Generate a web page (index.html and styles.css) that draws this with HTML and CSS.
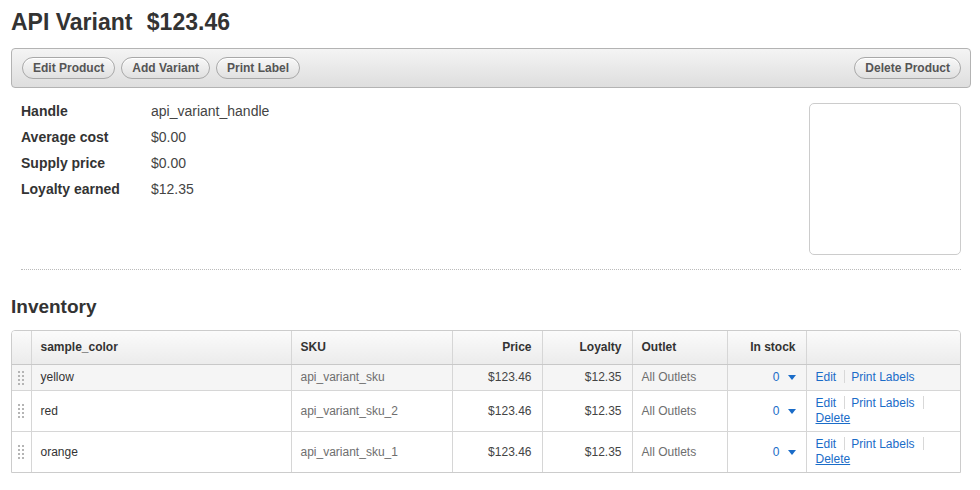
FILE: index.html
```html
<!DOCTYPE html>
<html>
<head>
<meta charset="utf-8">
<link rel="stylesheet" href="styles.css">
</head>
<body>
<div class="page">
  <h1 class="title">API Variant <span class="title-price">$123.46</span></h1>

  <div class="toolbar">
    <div class="toolbar-left">
      <button class="btn">Edit Product</button>
      <button class="btn">Add Variant</button>
      <button class="btn">Print Label</button>
    </div>
    <button class="btn">Delete Product</button>
  </div>

  <div class="details">
    <dl class="info">
      <dt>Handle</dt><dd>api_variant_handle</dd>
      <dt>Average cost</dt><dd>$0.00</dd>
      <dt>Supply price</dt><dd>$0.00</dd>
      <dt>Loyalty earned</dt><dd>$12.35</dd>
    </dl>
    <div class="image-box"></div>
  </div>

  <h2 class="section-title">Inventory</h2>

  <div class="table-wrap">
    <table class="inv">
      <colgroup>
        <col class="c-handle"><col class="c-color"><col class="c-sku"><col class="c-price"><col class="c-loyalty"><col class="c-outlet"><col class="c-stock"><col class="c-actions">
      </colgroup>
      <thead>
        <tr>
          <th></th>
          <th>sample_color</th>
          <th>SKU</th>
          <th class="num">Price</th>
          <th class="num">Loyalty</th>
          <th>Outlet</th>
          <th class="num">In stock</th>
          <th></th>
        </tr>
      </thead>
      <tbody>
        <tr class="hover">
          <td class="drag"><span class="grip"></span></td>
          <td class="name">yellow</td>
          <td class="muted">api_variant_sku</td>
          <td class="num">$123.46</td>
          <td class="num">$12.35</td>
          <td class="muted">All Outlets</td>
          <td class="num"><a class="stock">0<span class="caret"></span></a></td>
          <td class="actions"><a>Edit</a><span class="sep"></span><a>Print Labels</a></td>
        </tr>
        <tr>
          <td class="drag"><span class="grip"></span></td>
          <td class="name">red</td>
          <td class="muted">api_variant_sku_2</td>
          <td class="num">$123.46</td>
          <td class="num">$12.35</td>
          <td class="muted">All Outlets</td>
          <td class="num"><a class="stock">0<span class="caret"></span></a></td>
          <td class="actions"><a>Edit</a><span class="sep"></span><a>Print Labels</a><span class="sep"></span><a class="del">Delete</a></td>
        </tr>
        <tr>
          <td class="drag"><span class="grip"></span></td>
          <td class="name">orange</td>
          <td class="muted">api_variant_sku_1</td>
          <td class="num">$123.46</td>
          <td class="num">$12.35</td>
          <td class="muted">All Outlets</td>
          <td class="num"><a class="stock">0<span class="caret"></span></a></td>
          <td class="actions"><a>Edit</a><span class="sep"></span><a>Print Labels</a><span class="sep"></span><a class="del">Delete</a></td>
        </tr>
      </tbody>
    </table>
  </div>
</div>
</body>
</html>
```

FILE: styles.css
```css
* { box-sizing: border-box; }
html, body { margin: 0; padding: 0; background: #fff; }
body {
  font-family: "Liberation Sans", Arial, Helvetica, sans-serif;
  color: #333;
}
.page {
  padding: 8px 9px 0 11px;
}
.title {
  margin: 0;
  font-size: 23px;
  line-height: 28px;
  font-weight: bold;
  color: #333;
}
.title-price { margin-left: 8px; }

.toolbar {
  margin-top: 12px;
  height: 40px;
  border: 1px solid #b3b3b3;
  border-radius: 4px;
  background: linear-gradient(#f4f4f4, #dedede);
  display: flex;
  align-items: center;
  justify-content: space-between;
  padding: 0 9px 0 10px;
}
.toolbar-left { display: flex; gap: 6px; }
.btn {
  height: 22px;
  padding: 0 10px;
  border: 1px solid #a8a8a8;
  border-radius: 11px;
  background: linear-gradient(#f8f8f8, #e0e0e0);
  font-family: "Liberation Sans", Arial, sans-serif;
  font-size: 12px;
  font-weight: bold;
  color: #555;
  line-height: 20px;
  box-shadow: inset 0 1px 0 #fff;
}

.details {
  margin: 10px 0 0 10px;
  padding: 0 0 14px 0;
  border-bottom: 1px dotted #bbb;
  display: flex;
  justify-content: space-between;
  align-items: flex-start;
  width: 940px;
}
.info {
  margin: 0;
  display: grid;
  grid-template-columns: 130px auto;
  font-size: 14px;
  line-height: 26px;
}
.info dt { font-weight: bold; color: #333; }
.info dd { margin: 0; color: #444; }
.image-box {
  margin-top: 5px;
  width: 152px;
  height: 152px;
  border: 1px solid #ccc;
  border-radius: 5px;
}

.section-title {
  margin: 25px 0 11px 0;
  font-size: 19px;
  line-height: 24px;
  font-weight: bold;
  color: #333;
}

.table-wrap {
  width: 950px;
  border: 1px solid #ccc;
  border-radius: 4px 4px 0 0;
  overflow: hidden;
}
.inv {
  width: 100%;
  table-layout: fixed;
  border-collapse: collapse;
  font-size: 12px;
  line-height: 15px;
}
.c-handle { width: 19px; }
.c-color { width: 260px; }
.c-sku { width: 161px; }
.c-price { width: 90px; }
.c-loyalty { width: 90px; }
.c-outlet { width: 95px; }
.c-stock { width: 79px; }
.c-actions { width: 154px; }

.inv th, .inv td {
  border-right: 1px solid #d6d6d6;
  border-bottom: 1px solid #d6d6d6;
  padding: 5px 10px 5px 9px;
  text-align: left;
  vertical-align: middle;
}
.inv th:last-child, .inv td:last-child { border-right: none; }
.inv tbody tr:last-child td { border-bottom: none; }
.inv thead th {
  background: linear-gradient(#fbfbfb, #ebebeb);
  border-bottom: 1px solid #c8c8c8;
  padding-top: 9px;
  padding-bottom: 9px;
  font-weight: bold;
  color: #333;
}
.inv .num { text-align: right; }
.inv td.num { color: #444; }
.inv tr.hover td { background: #f5f5f5; }
.inv td.name { color: #333; }
.inv td.muted { color: #6e6e6e; }
.inv td.drag { padding: 0; text-align: center; }
.grip {
  display: inline-block;
  width: 6px;
  height: 14px;
  vertical-align: middle;
  background-image: radial-gradient(circle, #b5b5b5 0.9px, transparent 1.1px);
  background-size: 4px 4px;
  background-position: -1px -1px;
}
.stock {
  color: #1a6cc8;
  display: inline-flex;
  align-items: center;
}
.caret {
  display: inline-block;
  width: 0;
  height: 0;
  margin-left: 8px;
  border-left: 4.5px solid transparent;
  border-right: 4.5px solid transparent;
  border-top: 5px solid #1a6cc8;
}
.actions a {
  color: #1a6cc8;
  text-decoration: none;
}
.actions a.del { text-decoration: underline; }
.sep {
  display: inline-block;
  width: 1px;
  height: 13px;
  background: #d8d8d8;
  vertical-align: -2px;
  margin: 0 6px 0 8px;
}
```
